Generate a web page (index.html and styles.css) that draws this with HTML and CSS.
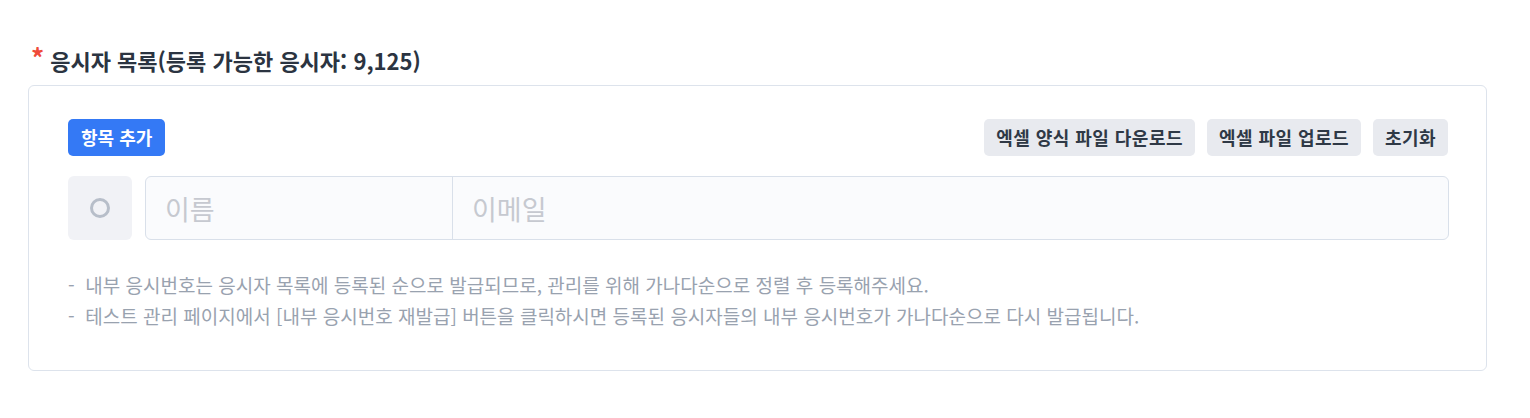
FILE: index.html
```html
<!DOCTYPE html>
<html lang="ko">
<head>
<meta charset="utf-8">
<link rel="stylesheet" href="styles.css">
</head>
<body>
<section class="field">
  <h2 class="field-title"><span class="req">*</span>응시자 목록(등록 가능한 응시자: 9,125)</h2>
  <div class="card">
    <div class="toolbar">
      <button class="btn btn-primary">항목 추가</button>
      <div class="toolbar-right">
        <button class="btn btn-gray">엑셀 양식 파일 다운로드</button>
        <button class="btn btn-gray">엑셀 파일 업로드</button>
        <button class="btn btn-gray">초기화</button>
      </div>
    </div>
    <div class="entry-row">
      <div class="radio-box"><span class="radio"></span></div>
      <div class="inputs">
        <input class="inp inp-name" type="text" placeholder="이름">
        <input class="inp inp-email" type="text" placeholder="이메일">
      </div>
    </div>
    <ul class="notes">
      <li>-&nbsp; 내부 응시번호는 응시자 목록에 등록된 순으로 발급되므로, 관리를 위해 가나다순으로 정렬 후 등록해주세요.</li>
      <li>-&nbsp; 테스트 관리 페이지에서 [내부 응시번호 재발급] 버튼을 클릭하시면 등록된 응시자들의 내부 응시번호가 가나다순으로 다시 발급됩니다.</li>
    </ul>
  </div>
</section>
</body>
</html>
```

FILE: styles.css
```css
* { box-sizing: border-box; }
html, body { margin: 0; padding: 0; background: #fff; }
body {
  font-family: "Noto Sans CJK KR", "Noto Sans", sans-serif;
  color: #2b3441;
}
.field {
  padding: 45px 43px 0 28px;
}
.field-title {
  margin: 0 0 10px 0;
  font-size: 22px;
  font-weight: 700;
  line-height: 30px;
  color: #2b3441;
  display: flex;
  align-items: center;
}
.req {
  color: #ef4b3a;
  font-size: 26px;
  margin: 0 6px 0 3px;
  line-height: 30px;
  position: relative;
  top: -3px;
}
.card {
  border: 1px solid #dde3ec;
  border-radius: 6px;
  padding: 33px 37px 39px 39px;
}
.toolbar {
  display: flex;
  justify-content: space-between;
  align-items: center;
  margin-right: 1px;
}
.toolbar-right {
  display: flex;
  gap: 12px;
}
.btn {
  font-family: inherit;
  font-size: 18px;
  font-weight: 700;
  height: 37px;
  line-height: 37px;
  padding: 0 12px;
  border: none;
  border-radius: 5px;
  cursor: pointer;
}
.btn-primary {
  background: #3479f5;
  color: #fff;
  padding: 0 13px;
}
.btn-gray {
  background: #e8eaef;
  color: #2f3946;
  letter-spacing: 0.45px;
}
.toolbar-right .btn { margin-top: -1px; }
.entry-row {
  display: flex;
  gap: 13px;
  margin-top: 20px;
}
.radio-box {
  width: 64px;
  height: 64px;
  background: #f1f2f6;
  border-radius: 6px;
  display: flex;
  align-items: center;
  justify-content: center;
  flex: none;
}
.radio {
  width: 20px;
  height: 20px;
  border: 3.5px solid #b7bec9;
  border-radius: 50%;
}
.inputs {
  flex: 1;
  display: flex;
  height: 64px;
  border: 1px solid #d9e0ea;
  border-radius: 6px;
  background: #fafbfd;
  overflow: hidden;
}
.inp {
  border: none;
  background: transparent;
  font-family: inherit;
  font-size: 27px;
  color: #2b3441;
  padding: 0 19px;
  height: 100%;
  outline: none;
}
.inp::placeholder { color: #c6c9d0; }
.inp-name {
  width: 307px;
  border-right: 1px solid #d9e0ea;
  flex: none;
}
.inp-email { flex: 1; min-width: 0; }
.notes {
  list-style: none;
  margin: 29px 0 0 0;
  padding: 0;
  font-size: 19px;
  line-height: 31px;
  color: #99a2af;
}
```
